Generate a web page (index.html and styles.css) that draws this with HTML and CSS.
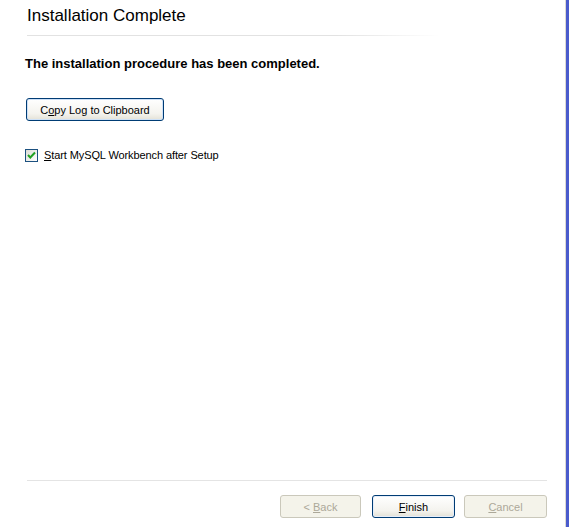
FILE: index.html
```html
<!DOCTYPE html>
<html lang="en">
<head>
  <meta charset="UTF-8">
  <meta name="viewport" content="width=device-width, initial-scale=1.0">
  <title>Installation Complete</title>
  <link rel="stylesheet" href="styles.css">
</head>
<body>
  <div class="window">
    <div class="dialog">
      <header class="header">
        <h1>Installation Complete</h1>
        <div class="rule header-rule"></div>
      </header>

      <section class="content">
        <p class="message">The installation procedure has been completed.</p>
        <button class="btn copy-btn">C<u>o</u>py Log to Clipboard</button>
        <label class="check">
          <span class="box">
            <svg width="9" height="9" viewBox="0 0 9 9">
              <path d="M1 4 L3.3 6.5 L8 1.5" fill="none" stroke="#21a121" stroke-width="2"/>
            </svg>
          </span>
          <span><u>S</u>tart MySQL Workbench after Setup</span>
        </label>
      </section>

      <footer class="footer">
        <div class="rule footer-rule"></div>
        <div class="actions">
          <button class="btn nav-btn back-btn" disabled>&lt; <u>B</u>ack</button>
          <button class="btn nav-btn finish-btn"><u>F</u>inish</button>
          <button class="btn nav-btn" disabled><u>C</u>ancel</button>
        </div>
      </footer>
    </div>
    <div class="frame"></div>
  </div>
</body>
</html>
```

FILE: styles.css
```css
body {
  margin: 0;
  padding: 0;
  background-color: #fff;
  font-family: "Liberation Sans", Arial, sans-serif;
  font-size: 11px;
  color: #000;
}

.window {
  display: flex;
  height: 527px;
}

.dialog {
  flex: 1;
  display: flex;
  flex-direction: column;
  border-right: 1px solid #dcdad2;
}

.frame {
  width: 3px;
  background-color: #4a5bcc; /* XP window edge */
}

.header {
  padding: 6px 0 0 27px;
}

.header h1 {
  margin: 0;
  font-size: 17px;
  font-weight: normal;
  line-height: 20px;
}

.rule {
  height: 1px;
}

.header-rule {
  margin-top: 9px;
  width: 413px;
  background: linear-gradient(to right, #e2e2e2 75%, #fff);
}

.content {
  flex: 1;
  padding: 0 0 0 25px;
}

.message {
  margin: 20px 0 0 0;
  font-size: 13px;
  font-weight: bold;
  line-height: 16px;
}

.btn {
  font-family: inherit;
  font-size: 11px;
  color: #000;
  height: 23px;
  padding: 0;
  border-radius: 3px;
  border: 1px solid #003c74;
  background: linear-gradient(#fff, #f4f3ee 70%, #e3e1d6);
}

.copy-btn {
  display: block;
  margin: 26px 0 0 1px;
  width: 138px;
  box-shadow: inset 0 0 0 1px #cde0f7;
}

.check {
  display: flex;
  align-items: center;
  gap: 6px;
  margin-top: 27px;
  line-height: 14px;
  letter-spacing: -0.1px;
}

.box {
  width: 11px;
  height: 11px;
  border: 1px solid #1c5180;
  background: linear-gradient(135deg, #dcdcd5, #fff);
  display: flex;
  align-items: center;
  justify-content: center;
}

.footer {
  padding: 0 18px 9px 27px;
}

.footer-rule {
  background-color: #e4e4e4;
}

.actions {
  display: flex;
  justify-content: flex-end;
  gap: 9px;
  margin-top: 14px;
}

.nav-btn {
  width: 83px;
}

.back-btn {
  width: 81px;
  margin-right: 2px;
}

.nav-btn:disabled {
  color: #aca899;
  border-color: #cac8bb;
  background: #f4f3ea;
}

.finish-btn {
  box-shadow: inset 0 0 0 1px #e6eefa;
}
```
